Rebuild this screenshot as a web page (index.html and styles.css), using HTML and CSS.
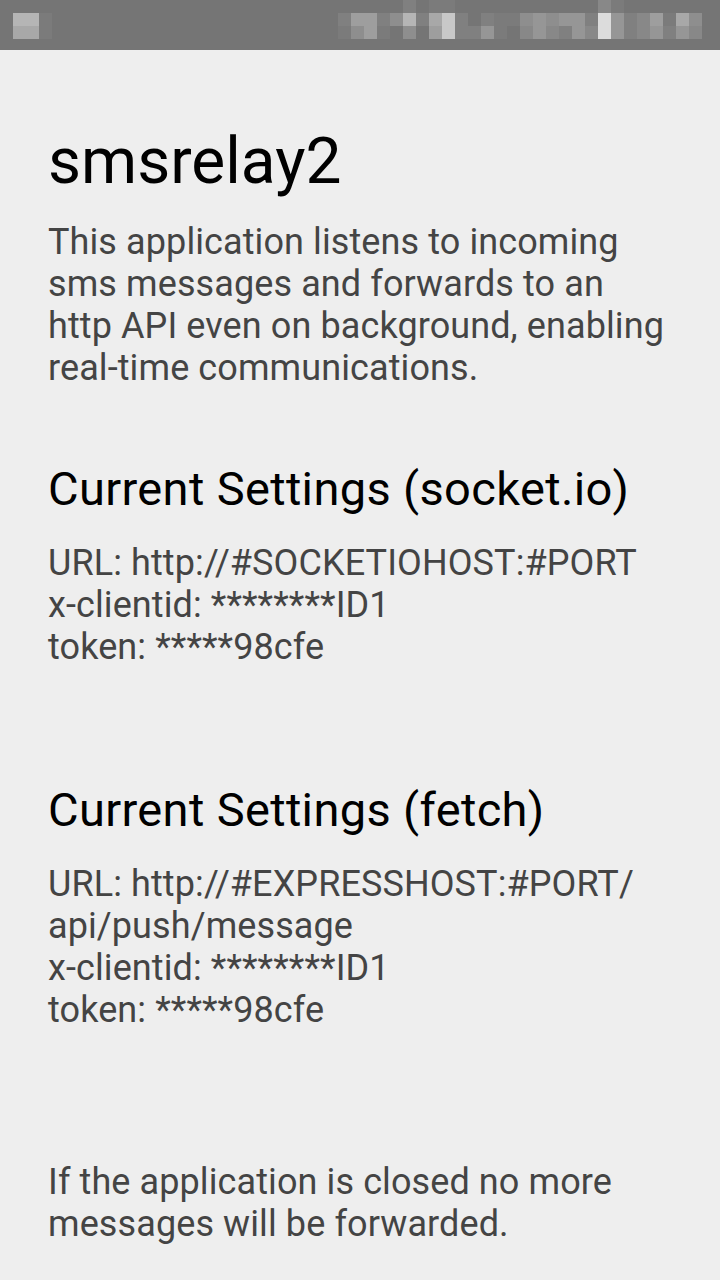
FILE: index.html
```html
<!DOCTYPE html>
<html>
<head>
<meta charset="utf-8">
<link rel="stylesheet" href="styles.css">
</head>
<body>
<div class="statusbar">
  <div class="mosaic left">
    <i></i><i></i><i></i>
    <i class="s8"></i><i class="s8"></i><i class="s1"></i>
    <i class="s7"></i><i class="s7"></i><i class="s1"></i>
  </div>
  <div class="mosaic right">
    <i></i><i></i><i></i><i></i><i></i><i class="s2"></i><i></i><i class="s1"></i><i class="s1"></i><i></i><i></i><i></i><i></i><i></i><i></i><i></i><i></i><i></i><i></i><i></i><i class="s3"></i><i class="s1"></i><i></i><i></i><i></i><i></i><i></i><i></i>
    <i class="s2"></i><i class="s6"></i><i class="s6"></i><i class="s2"></i><i class="s4"></i><i class="s8"></i><i class="s2"></i><i class="s7"></i><i class="s9"></i><i class="s2"></i><i></i><i class="s2"></i><i class="s1"></i><i class="s1"></i><i class="s4"></i><i class="s5"></i><i class="s4"></i><i class="s5"></i><i class="s5"></i><i class="s2"></i><i class="s10"></i><i class="s5"></i><i class="s2"></i><i class="s3"></i><i class="s6"></i><i class="s1"></i><i class="s7"></i><i class="s4"></i>
    <i class="s1"></i><i class="s4"></i><i class="s6"></i><i class="s1"></i><i></i><i class="s4"></i><i></i><i class="s6"></i><i class="s9"></i><i class="s2"></i><i class="s2"></i><i class="s5"></i><i class="s1"></i><i></i><i class="s3"></i><i class="s5"></i><i class="s3"></i><i class="s2"></i><i class="s5"></i><i class="s3"></i><i class="s10"></i><i class="s5"></i><i class="s2"></i><i class="s3"></i><i class="s5"></i><i class="s2"></i><i class="s5"></i><i class="s3"></i>
  </div>
</div>
<main class="content">
  <h1 class="title">smsrelay2</h1>
  <p class="text intro">This application listens to incoming<br>sms messages and forwards to an<br>http API even on background, enabling<br>real-time communications.</p>

  <h2 class="heading first">Current Settings (socket.io)</h2>
  <p class="text settings">URL: http://#SOCKETIOHOST:#PORT<br>x-clientid: ********ID1<br>token: *****98cfe</p>

  <h2 class="heading second">Current Settings (fetch)</h2>
  <p class="text settings">URL: http://#EXPRESSHOST:#PORT/<br>api/push/message<br>x-clientid: ********ID1<br>token: *****98cfe</p>

  <p class="text footer">If the application is closed no more<br>messages will be forwarded.</p>
</main>
</body>
</html>
```

FILE: styles.css
```css
html, body {
  margin: 0;
  padding: 0;
  background: #eeeeee;
}

body {
  width: 720px;
  height: 1280px;
  overflow: hidden;
  font-family: Roboto, "Noto Sans", sans-serif;
}

.statusbar {
  height: 50px;
  background: #757575;
  display: flex;
  justify-content: space-between;
  align-items: flex-start;
  padding: 0 18px 0 13px;
}

.mosaic {
  display: grid;
  grid-auto-rows: 13px;
}

.mosaic.left {
  grid-template-columns: repeat(3, 13px);
}

.mosaic.right {
  grid-template-columns: repeat(28, 13px);
}

.mosaic i {
  display: block;
  background: #757575;
}

.mosaic i.s1 { background: #7b7b7b; }
.mosaic i.s2 { background: #808080; }
.mosaic i.s3 { background: #888888; }
.mosaic i.s4 { background: #8e8e8e; }
.mosaic i.s5 { background: #969696; }
.mosaic i.s6 { background: #9e9e9e; }
.mosaic i.s7 { background: #a8a8a8; }
.mosaic i.s8 { background: #b5b5b5; }
.mosaic i.s9 { background: #c8c8c8; }
.mosaic i.s10 { background: #dcdcdc; }

.content {
  padding: 0 48px;
}

.title {
  margin: 74px 0 0;
  font-size: 64px;
  font-weight: 400;
  line-height: 75px;
  color: #000000;
}

.text {
  margin: 0;
  font-size: 36px;
  letter-spacing: 0.1px;
  line-height: 42px;
  color: #444444;
  white-space: nowrap;
}

.intro {
  margin-top: 22px;
}

.heading {
  margin: 0;
  font-size: 47px;
  font-weight: 400;
  letter-spacing: 0.35px;
  line-height: 52px;
  color: #000000;
  white-space: nowrap;
}

.heading.first {
  margin-top: 74px;
}

.heading.second {
  margin-top: 116px;
}

.settings {
  margin-top: 27px;
}

.footer {
  margin-top: 130px;
}
```
